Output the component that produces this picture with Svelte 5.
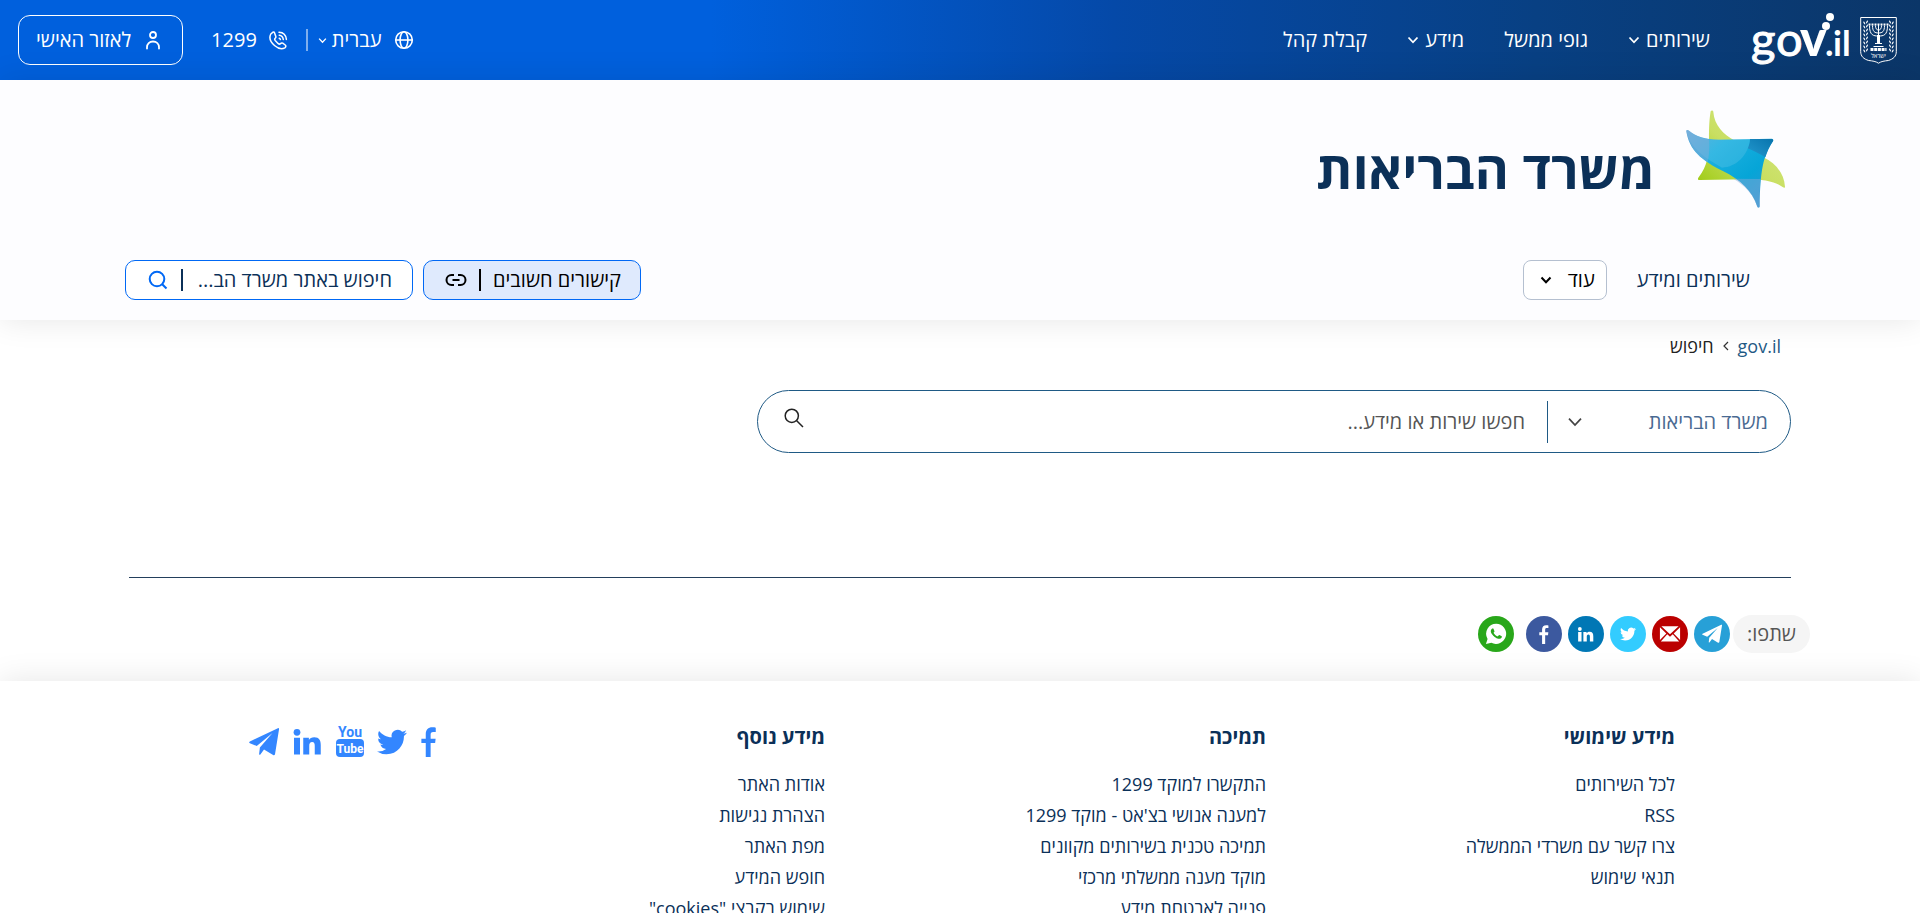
<script>
  const footerColumns = [
    {
      title: 'מידע שימושי',
      links: ['לכל השירותים', 'RSS', 'צרו קשר עם משרדי הממשלה', 'תנאי שימוש']
    },
    {
      title: 'תמיכה',
      links: [
        'התקשרו למוקד 1299',
        "למענה אנושי בצ'אט - מוקד 1299",
        'תמיכה טכנית בשירותים מקוונים',
        'מוקד מענה ממשלתי מרכזי',
        'פנייה לאבטחת מידע'
      ]
    },
    {
      title: 'מידע נוסף',
      links: ['אודות האתר', 'הצהרת נגישות', 'מפת האתר', 'חופש המידע', 'שימוש בקבצי "cookies"']
    }
  ];

  const share = [
    { id: 'telegram', label: 'Telegram', color: '#27a0d7', size: 20 },
    { id: 'mail', label: 'Email', color: '#bb0000', size: 22 },
    { id: 'twitter', label: 'Twitter', color: '#33ccff', size: 16 },
    { id: 'linkedin', label: 'LinkedIn', color: '#0077b5', size: 17 },
    { id: 'facebook', label: 'Facebook', color: '#3c599f', size: 19 },
    { id: 'whatsapp', label: 'WhatsApp', color: '#29a71a', size: 22 }
  ];

  const social = ['facebook', 'twitter', 'youtube', 'linkedin', 'telegram'];
  const wreath = [25, 29, 33, 37, 41, 45, 49, 53];
</script>

{#snippet chevron(size, weight)}
  <svg width={size} height={size} viewBox="0 0 12 12" fill="none" stroke="currentColor" stroke-width={weight} aria-hidden="true">
    <path d="M1.500 3.500 6 8.300l4.500-4.800" />
  </svg>
{/snippet}

{#snippet glyph(id)}
  {#if id === 'telegram'}
    <path fill="currentColor" d="M23.100.9.700 11.600c-.8.4-.8 1 0 1.300l5.500 2.300L18.800 4.800 8.700 16.400l-.6 5.200c0 .7.6.9 1 .4l2.900-4 7.300 4.400c.7.4 1.300.1 1.500-.7L24 1.900c.1-.9-.2-1.300-.9-1z" />
  {:else if id === 'mail'}
    <path fill="currentColor" d="M2.600 3.500h18.800L12 12.300zM1 4.700l7 6.700L1 18.500zM23 4.700l-7 6.700 7 7.100zM9 12.400l3 2.700 3-2.700 7 7.800H2z" />
  {:else if id === 'twitter'}
    <path fill="currentColor" d="M23.953 4.570a10 10 0 01-2.825.775 4.958 4.958 0 002.163-2.723c-.951.555-2.005.959-3.127 1.184a4.920 4.920 0 00-8.384 4.482C7.690 8.095 4.067 6.130 1.640 3.162a4.822 4.822 0 00-.666 2.475c0 1.710.870 3.213 2.188 4.096a4.904 4.904 0 01-2.228-.616v.060a4.923 4.923 0 003.946 4.827 4.996 4.996 0 01-2.212.085 4.936 4.936 0 004.604 3.417 9.867 9.867 0 01-6.102 2.105c-.390 0-.779-.023-1.170-.067a13.995 13.995 0 007.557 2.209c9.053 0 13.998-7.496 13.998-13.985 0-.210 0-.420-.015-.630A9.935 9.935 0 0024 4.590z" />
  {:else if id === 'linkedin'}
    <g fill="currentColor">
      <circle cx="4" cy="4.200" r="2.700" />
      <path d="M1.600 8.500h4.800V22H1.600zM9 8.500h4.500v1.900c.8-1.400 2.300-2.200 4.300-2.200 4 0 5.200 2.500 5.200 6.200V22h-4.800v-6.800c0-1.700-.3-3.200-2.100-3.200-1.800 0-2.300 1.400-2.300 3.100V22H9z" />
    </g>
  {:else if id === 'facebook'}
    <path fill="currentColor" d="M10.200 24V12.800H6.700V9.300h3.500V5.700c0-3.600 2-5.500 5.200-5.500 1.300 0 2.200.1 2.800.3v3.400h-2.100c-1.500 0-2 .7-2 2.100v3.300h4l-.4 3.500h-3.600V24z" />
  {:else}
    <path fill="currentColor" d="M12.300.8a11 11 0 0 0-9.500 16.600L1 23l5.900-1.500A11 11 0 1 0 12.300.8z" />
    <path fill="#29a71a" transform="translate(.3 -.3)" d="M17.472 14.382c-.297-.149-1.758-.867-2.030-.967-.273-.099-.471-.148-.670.150-.197.297-.767.966-.940 1.164-.173.199-.347.223-.644.075-.297-.150-1.255-.463-2.390-1.475-.883-.788-1.480-1.761-1.653-2.059-.173-.297-.018-.458.130-.606.134-.133.298-.347.446-.520.149-.174.198-.298.298-.497.099-.198.050-.371-.025-.520-.075-.149-.669-1.612-.916-2.207-.242-.579-.487-.500-.669-.510-.173-.008-.371-.010-.570-.010-.198 0-.520.074-.792.372-.272.297-1.040 1.016-1.040 2.479 0 1.462 1.065 2.875 1.213 3.074.149.198 2.096 3.200 5.077 4.487.709.306 1.262.489 1.694.625.712.227 1.360.195 1.871.118.571-.085 1.758-.719 2.006-1.413.248-.694.248-1.289.173-1.413-.074-.124-.272-.198-.570-.347" />
  {/if}
{/snippet}

<div class="page" dir="rtl" lang="he">
  <header class="topbar">
    <a class="gov" href="#home" aria-label="gov.il">
      <svg width="38" height="48" viewBox="1859 18 38 48" fill="none" stroke="#fff" aria-hidden="true">
        <path stroke-width="1" d="M1860.700 19.500h35.600v34c0 5-3 7.500-8 9-4 .5-7 .8-9.800 2.700-2.800-1.900-5.800-2.200-9.800-2.700-5-1.500-8-4-8-9z" />
        <g stroke-width="1">
          <path d="M1869.500 27.500c0 10 4 10.500 9 10.500s9-.5 9-10.500M1872.500 27.500c0 6 2 7.500 6 7.500s6-1.500 6-7.500M1875.500 27.500c0 3 1 4.500 3 4.500s3-1.500 3-4.500M1878.500 26.500V45" />
          <path stroke-width="2" stroke-dasharray="2 1" d="M1868.500 26.500h20" />
          <path stroke-width="3" d="M1878.500 37v8" />
          <path d="M1875 45.500h7M1873.500 48.500h10" />
          <path stroke-width="3" stroke-dasharray="3 .7" d="M1870.500 51.500h16" />
        </g>
        <g fill="#fff" stroke="none">
          {#each wreath as y}
            <ellipse cx="1864.300" cy={y} rx=".7" ry="1.600" transform="rotate(-30 1864.300 {y})" />
            <ellipse cx="1867" cy={y - 1} rx=".7" ry="1.600" transform="rotate(30 1867 {y - 1})" />
            <ellipse cx="1892.700" cy={y} rx=".7" ry="1.600" transform="rotate(30 1892.700 {y})" />
            <ellipse cx="1890" cy={y - 1} rx=".7" ry="1.600" transform="rotate(-30 1890 {y - 1})" />
          {/each}
          <text x="1878.500" y="60" font-size="6" text-anchor="middle">ישראל</text>
        </g>
      </svg>
      <svg class="wordmark" width="98" height="56" viewBox="1752 11 98 56" fill="#fff" direction="ltr" aria-hidden="true">
        <text x="1751" y="56" font-size="47" class="round">g</text>
        <text x="1776" y="56" font-size="47" class="round">o</text>
        <text x="1800" y="56" font-size="50" class="heavy">v</text>
        <text x="1825" y="56" font-size="36" class="bold">.</text>
        <text x="1833" y="56" font-size="35" class="bold">il</text>
        <circle cx="1826" cy="26" r="4" />
        <circle cx="1830" cy="17" r="4" />
      </svg>
    </a>
    <nav class="main-nav" aria-label="ראשי">
      <button>שירותים {@render chevron(12, 1.800)}</button>
      <a href="#bodies">גופי ממשל</a>
      <button>מידע {@render chevron(12, 1.800)}</button>
      <a href="#reception">קבלת קהל</a>
    </nav>
    <div class="tools">
      <button class="lang">
        <svg width="20" height="20" viewBox="0 0 20 20" fill="none" stroke="currentColor" stroke-width="1.600" aria-hidden="true">
          <circle cx="10" cy="10" r="8.300" />
          <ellipse cx="10" cy="10" rx="3.900" ry="8.300" />
          <path d="M1.700 10h16.600" />
        </svg>
        <span>עברית</span>
        {@render chevron(9, 1.800)}
      </button>
      <span class="bar"></span>
      <a class="phone" href="tel:1299">
        <svg width="20" height="20" viewBox="0 0 20 20" fill="none" stroke="currentColor" stroke-width="1.500" stroke-linejoin="round" stroke-linecap="round" aria-hidden="true">
          <path d="M5 2.200 2.800 4C.8 8 3 12.500 6.500 15.500S14 19.500 16.800 17.800c1.200-1 1.400-1.800.4-2.800l-2.500-1.800c-.8-.5-1.500-.3-2.200.4-.8.8-1.500.7-2.500-.2L7.200 10.500c-.8-1-.8-1.500 0-2.300.9-.8.9-1.400.4-2.300L6.500 2.800C6.200 2 5.600 1.800 5 2.200z" />
          <path d="M11.200 8.200c.8.200 1.100.7 1.200 1.400M11.200 5.200c2.400.3 3.800 1.900 4.100 4.300M11 2.200c4.400.2 7 3 7.400 7.200" />
        </svg>
        <span>1299</span>
      </a>
      <a class="personal" href="#personal">
        <svg width="16" height="20" viewBox="0 0 16 20" fill="none" stroke="currentColor" stroke-width="1.800" stroke-linecap="round" aria-hidden="true">
          <circle cx="8" cy="5" r="3" />
          <path d="M2 18.500v-1.200c0-3.500 2.500-5.800 6-5.800s6 2.300 6 5.800v1.200" />
        </svg>
        <span>לאזור האישי</span>
      </a>
    </div>
  </header>

  <section class="ministry">
    <div class="brand">
      <svg width="100" height="98" viewBox="78 43 300 294" aria-hidden="true">
        <defs>
          <linearGradient id="leaf" x1="0" y1="1" x2="1" y2="0">
            <stop offset="0" stop-color="#9cca10" />
            <stop offset=".45" stop-color="#c9df62" />
            <stop offset="1" stop-color="#d6e88c" />
          </linearGradient>
          <linearGradient id="wave" x1="0" y1="0" x2="1" y2="1">
            <stop offset="0" stop-color="#5aa9da" />
            <stop offset=".3" stop-color="#1cb0e0" />
            <stop offset=".65" stop-color="#06a5d7" />
            <stop offset="1" stop-color="#3291d0" />
          </linearGradient>
          <linearGradient id="tip" x1="0" y1="1" x2="1" y2="0">
            <stop offset="0" stop-color="#2499cf" />
            <stop offset="1" stop-color="#0874ad" />
          </linearGradient>
        </defs>
        <path fill="url(#leaf)" d="M152 47c3-4 8-2 8 2 3 40 30 68 65 86l85 50c37 17 62 48 65 88 0 4-3 4-6 2-24-18-60-24-110-24l-141 2c-5 0-5-4-2-8 29-40 32-75 31-115 0-35 1-60 5-83z" />
        <path fill="url(#wave)" d="M79 107c0-4 4-5 8-2 20 17 48 26 90 27l158-3c4 0 6 3 4 7-30 45-38 90-40 195 0 6-5 6-7 2-16-48-50-80-102-106C125 194 88 165 79 107z" />
        <path fill="url(#tip)" d="M270 130h65c4 0 6 3 4 7-11 16-18 33-23 48-16-10-35-19-53-27 5-9 7-18 7-28z" />
        <path fill="#7fd0ec" opacity=".25" d="M150 131h120c-4 45-40 84-84 85-55-30-95-60-107-109 0-4 4-5 8-2 18 15 38 23 63 26z" />
        <path fill="#8ba9d8" opacity=".45" d="M87 105c18 15 38 23 60 26 2 30 0 50-4 69-35-22-57-54-64-93 0-4 4-5 8-2zM220 249l82 1c-3 23-3 50-3 81 0 6-5 6-7 2-12-36-36-63-72-84z" />
      </svg>
      <h1>משרד הבריאות</h1>
    </div>
    <div class="subnav">
      <a class="services" href="#services">שירותים ומידע</a>
      <button class="more">עוד {@render chevron(12, 2)}</button>
      <button class="links">
        <span>קישורים חשובים</span>
        <i></i>
        <svg width="22" height="14" viewBox="0 0 22 14" fill="none" stroke="currentColor" stroke-width="2" aria-hidden="true">
          <path d="M9 2H6.500a5 5 0 0 0 0 10H9M13 2h2.500a5 5 0 0 1 0 10H13M7.500 7h7" />
        </svg>
      </button>
      <form class="site-search" onsubmit={(e) => e.preventDefault()}>
        <input type="text" aria-label="חיפוש באתר" placeholder="חיפוש באתר משרד הב..." />
        <i></i>
        <button aria-label="חיפוש">
          <svg width="20" height="20" viewBox="0 0 20 20" fill="none" stroke="#0068f5" stroke-width="2" aria-hidden="true">
            <circle cx="9" cy="9" r="7.300" />
            <path d="m14.200 14.200 4.300 4.300" />
          </svg>
        </button>
      </form>
    </div>
  </section>

  <main>
    <nav class="crumbs" aria-label="מיקום">
      <a href="#home" dir="ltr">gov.il</a>
      <svg width="6" height="10" viewBox="0 0 6 10" fill="none" stroke="#333" stroke-width="1.200" aria-hidden="true"><path d="M5 1 1 5l4 4" /></svg>
      <span>חיפוש</span>
    </nav>
    <form class="search" onsubmit={(e) => e.preventDefault()}>
      <div class="scope">
        <select aria-label="משרד">
          <option>משרד הבריאות</option>
        </select>
        <span class="arrow">{@render chevron(16, 1.300)}</span>
      </div>
      <input type="text" aria-label="חיפוש שירות או מידע" placeholder="חפשו שירות או מידע..." />
      <button aria-label="חפש">
        <svg width="20" height="20" viewBox="0 0 20 20" fill="none" stroke="#222" stroke-width="1.500" aria-hidden="true">
          <circle cx="7.800" cy="7.800" r="6.600" />
          <path d="m12.500 12.500 6.500 6.500" />
        </svg>
      </button>
    </form>
    <hr />
    <div class="share">
      <span class="share-label">שתפו:</span>
      {#each share as item}
        <a class={item.id} href="#{item.id}" aria-label={item.label} style="background:{item.color}">
          <svg width={item.size} height={item.size} viewBox="0 0 24 24" aria-hidden="true">{@render glyph(item.id)}</svg>
        </a>
      {/each}
    </div>
  </main>

  <footer>
    {#each footerColumns as column}
      <section>
        <h2>{column.title}</h2>
        <ul>
          {#each column.links as link}
            <li><a href="#footer">{link}</a></li>
          {/each}
        </ul>
      </section>
    {/each}
    <div class="social">
      {#each social as id}
        <a class={id} href="#{id}" aria-label={id}>
          {#if id === 'youtube'}
            <svg width="28" height="34" viewBox="0 0 28 34" direction="ltr" aria-hidden="true">
              <text x="14" y="13" font-size="14" text-anchor="middle" fill="#3386ff">You</text>
              <rect y="15" width="28" height="18" rx="4" fill="#3386ff" />
              <text x="14" y="29" font-size="12" text-anchor="middle" fill="#fff">Tube</text>
            </svg>
          {:else}
            <svg width="30" height="30" viewBox="0 0 24 24" aria-hidden="true">{@render glyph(id)}</svg>
          {/if}
        </a>
      {/each}
    </div>
  </footer>
</div>

<style>
  :global(body) { margin: 0; }
  .page {
    height: 100vh;
    overflow-y: auto;
    scrollbar-width: none;
    background: #fff;
    color: #0b3058;
    font: 20px/24px "Open Sans", "Noto Sans", sans-serif;
  }
  a { color: inherit; text-decoration: none; }
  button, input, select { font: inherit; color: inherit; border: 0; padding: 0; background: none; outline: 0; }
  button { cursor: pointer; }
  svg { display: block; flex: none; }
  .topbar {
    height: 80px;
    display: flex;
    align-items: center;
    padding-inline: 23px 18px;
    color: #fff;
    background: linear-gradient(to left, #0b3668 0%, #084083 20%, #0549a8 42%, #0060dd 63%);
  }
  .gov { display: flex; gap: 9px; align-items: center; }
  .wordmark { margin-bottom: 2px; overflow: visible; font-family: Lato, sans-serif; }
  .wordmark .round { stroke: #fff; stroke-width: 1; }
  .wordmark .bold { font-weight: 700; }
  .wordmark .heavy { font-weight: 900; }
  .main-nav { display: flex; gap: 40px; margin-inline-start: 42px; }
  .main-nav button { display: flex; align-items: center; gap: 6px; }
  .tools { display: flex; align-items: center; margin-inline-start: auto; }
  .lang { display: flex; align-items: center; }
  .lang span { margin-inline: 12px 5px; }
  .bar { width: 2px; height: 22px; background: #7fafee; margin-inline: 10px 18px; }
  .phone { display: flex; align-items: center; gap: 11px; }
  .personal {
    display: flex;
    align-items: center;
    gap: 14px;
    box-sizing: border-box;
    height: 50px;
    margin-inline-start: 28px;
    padding-inline: 21px 17px;
    border: 1px solid #fff;
    border-radius: 12px;
  }
  .ministry { position: relative; padding: 30px 125px 20px; background: #fdfdff; box-shadow: 0 0 30px rgba(0, 0, 0, .1); }
  .brand { display: flex; gap: 31px; padding-inline-start: 9px; }
  h1 { margin: 23px 0 0; font-size: 52px; line-height: 72px; font-weight: 700; }
  .subnav { display: flex; align-items: center; margin-top: 52px; padding-inline-start: 45px; }
  .subnav > * { box-sizing: border-box; height: 40px; }
  .services { line-height: 40px; }
  .more {
    display: flex;
    align-items: center;
    justify-content: space-between;
    width: 84px;
    margin-inline-start: 30px;
    padding-inline: 11px 16px;
    color: #000;
    background: #fff;
    border: 1px solid #b5c0d0;
    border-radius: 8px;
  }
  .links, .site-search { display: flex; align-items: center; border: 1px solid #0068f5; border-radius: 10px; }
  .links { width: 218px; margin-inline-start: auto; padding-inline: 19px 21px; color: #000; background: #dfeafd; justify-content: space-between; }
  .site-search { width: 288px; margin-inline-start: 10px; padding-inline: 20px 22px; background: #fff; gap: 13px; }
  .site-search input { flex: 1; min-width: 0; }
  .site-search input::placeholder { color: #0b3058; opacity: 1; }
  .subnav i { width: 2px; height: 22px; background: currentColor; }
  main { padding: 14px 129px 28px; }
  .crumbs { display: flex; align-items: center; gap: 9px; padding-inline-start: 10px; color: #222; font-size: 18px; }
  .crumbs a { color: #1f5a85; }
  .search {
    display: flex;
    align-items: center;
    box-sizing: border-box;
    width: 62.200%;
    height: 63px;
    margin-top: 32px;
    padding-inline: 22px 26px;
    border: 1px solid #1f5a85;
    border-radius: 32px;
  }
  .scope { position: relative; width: 220px; height: 42px; border-inline-end: 1px solid #1f5a85; }
  .scope select { width: 100%; height: 100%; appearance: none; color: #4a6a92; }
  .arrow { position: absolute; left: 19px; top: 13px; color: #444; pointer-events: none; }
  .search input { flex: 1; min-width: 0; padding-inline-start: 22px; }
  .search input::placeholder { color: #555; opacity: 1; }
  .search button { align-self: flex-start; margin-top: 17px; }
  hr { margin: 124px 0 37px; border: 0; border-top: 1px solid #233f5c; }
  .share { display: flex; align-items: center; gap: 6px; margin-inline-start: -19px; }
  .share-label { margin-inline-end: -3px; padding: 7px 14px; border-radius: 19px; background: #f5f5f5; color: #555; }
  .share a { display: grid; place-items: center; width: 36px; height: 36px; border-radius: 50%; color: #fff; }
  .share .whatsapp { margin-inline-start: 6px; }
  footer {
    display: grid;
    grid-template-columns: 409fr 441fr 389fr 191fr;
    padding: 43px 245px 40px;
    box-shadow: 0 0 30px rgba(0, 0, 0, .1);
  }
  h2 { margin: 0 0 19px; font-size: 20px; line-height: 26px; font-weight: 700; }
  ul { list-style: none; margin: 0; padding: 0; }
  li { font-size: 18px; line-height: 31px; white-space: nowrap; }
  .social { display: flex; align-items: flex-start; justify-content: space-between; color: #3386ff; margin-inline-end: 4px; }
  .social svg { margin-top: 3px; }
  .social .facebook { margin-inline: -7px; }
  .social .youtube svg { margin-top: 0; font-family: "Liberation Sans Narrow", Roboto, sans-serif; font-weight: 700; }
</style>
